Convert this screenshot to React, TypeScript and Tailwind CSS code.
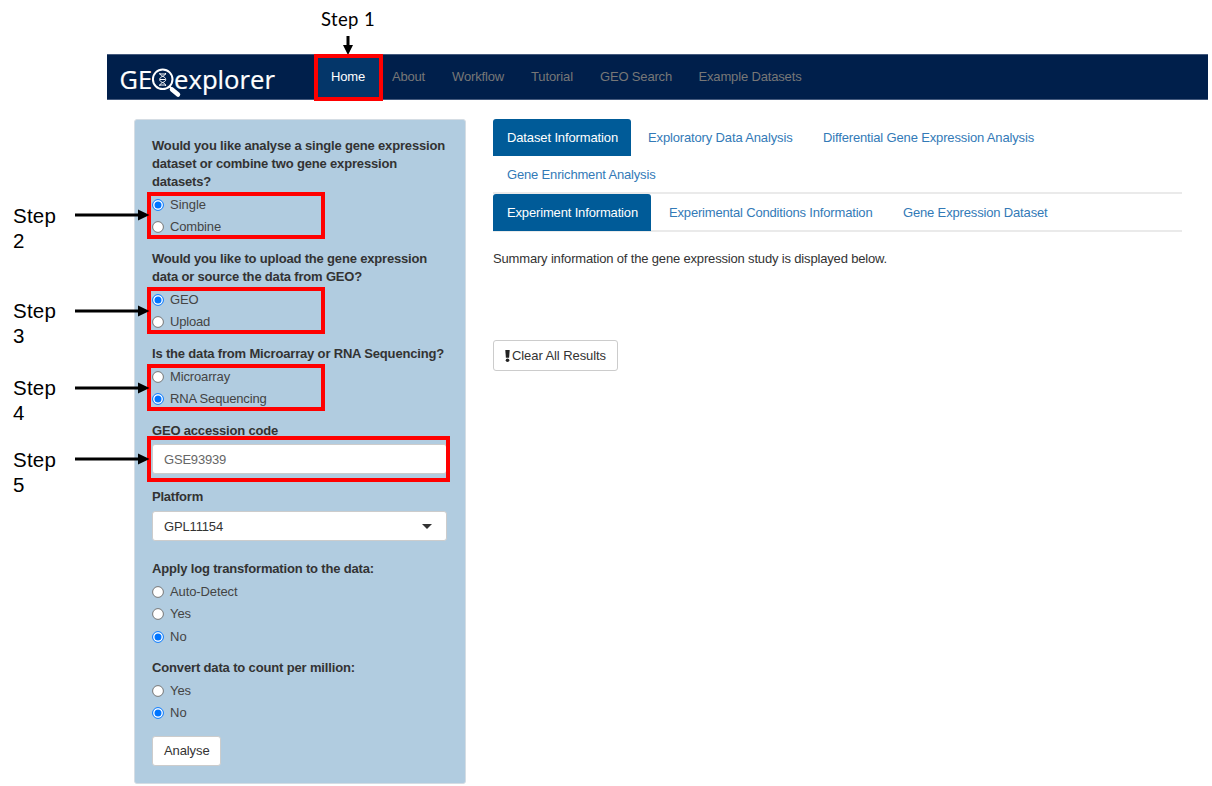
import React from "react";

function T({ w, children, className = "" }: { w: number; children: string; className?: string }) {
  const ref = React.useRef<HTMLSpanElement>(null);
  React.useLayoutEffect(() => {
    const el = ref.current;
    if (!el) return;
    el.style.letterSpacing = "0px";
    const natural = el.getBoundingClientRect().width;
    el.style.letterSpacing = `${(w - natural) / children.length}px`;
  }, [w, children]);
  return (
    <span ref={ref} className={`inline-block whitespace-nowrap ${className}`}>
      {children}
    </span>
  );
}

function Label({ lines }: { lines: [string, number][] }) {
  return (
    <div className="font-bold text-[#333]">
      {lines.map(([text, w]) => (
        <div key={text} className="h-[18px] leading-[18px]">
          <T w={w}>{text}</T>
        </div>
      ))}
    </div>
  );
}

function Radio({ text, w, on = false, tight = false }: { text: string; w: number; on?: boolean; tight?: boolean }) {
  return (
    <label className={`flex items-center gap-[6px] text-[#444] ${tight ? "h-[22px]" : "h-[22.5px]"}`}>
      <svg viewBox="0 0 12 12" className="size-3 shrink-0">
        <circle cx="6" cy="6" r="5.4" fill="#fff" stroke={on ? "#0075ff" : "#767676"} strokeWidth="1" />
        {on && <circle cx="6" cy="6" r="3.5" fill="#0075ff" />}
      </svg>
      <T w={w} className="leading-[18px]">{text}</T>
    </label>
  );
}

function Logo() {
  return (
    <svg viewBox="0 0 160 44" className="h-[44px] w-[160px] shrink-0" fill="#fff">
      <g fontFamily="'Open Sans', 'Noto Sans', sans-serif" fontSize="25.5" stroke="#fff" strokeWidth="0.2">
        <text x="-0.5" y="33.5" textLength="32.5" lengthAdjust="spacingAndGlyphs">GE</text>
        <text x="54" y="33.5" textLength="101" lengthAdjust="spacingAndGlyphs">explorer</text>
      </g>
      <g fill="none" stroke="#fff">
        <circle cx="42.7" cy="24.3" r="9.8" strokeWidth="2" />
        <path d="M49.5 31.5L52 34" strokeWidth="2" />
        <path d="M52 34.5L58 39.5" strokeWidth="4.5" strokeLinecap="round" />
        <path d="M39.7 18C39.7 21.5 45.7 21 45.7 24.5S39.7 27 39.7 31M45.7 18C45.7 21.5 39.7 21 39.7 24.5S45.7 27 45.7 31M39.7 19h6M40 24.5h5.4M39.7 30h6" strokeWidth="1" />
      </g>
    </svg>
  );
}

const nav: [string, number, string][] = [
  ["About", 33, "ml-[10px]"],
  ["Workflow", 52, "ml-[27px]"],
  ["Tutorial", 42, "ml-[27px]"],
  ["GEO Search", 72, "ml-[27px]"],
  ["Example Datasets", 103, "ml-[26.5px]"],
];

function Arrow({ className }: { className: string }) {
  return (
    <svg viewBox="0 0 75 12" className={`absolute left-[75px] h-3 w-[75px] ${className}`}>
      <path d="M0 4.5H63V0.5L74.5 6L63 11.5V7.5H0Z" fill="#000" />
    </svg>
  );
}

function Step({ n, className }: { n: string; className: string }) {
  return (
    <div className={`absolute left-[13px] w-12 text-[20.5px] leading-[25px] text-black ${className}`}>
      <T w={43}>Step</T>
      <div>{n}</div>
    </div>
  );
}

export default function App() {
  return (
    <div className="relative h-[786px] w-[1212px] overflow-hidden bg-white pt-[54px] font-['Liberation_Sans',Arial,sans-serif] text-[13px] text-[#333]">
      <header className="ml-[107px] flex h-[46px] w-[1101px] items-center border-y border-[#455a7d] bg-[#001f4b] pl-[13px] text-[#777]">
        <Logo />
        <div className="ml-[35px] flex h-full w-[67px] items-center bg-[#043669] pl-4 text-white">
          <T w={34}>Home</T>
        </div>
        {nav.map(([text, w, cls]) => (
          <div key={text} className={cls}>
            <T w={w}>{text}</T>
          </div>
        ))}
      </header>

      <div className="flex pt-[19px] pl-[134px]">
        <aside className="flex h-[665px] w-[332px] flex-col rounded-[3px] border border-[#d5dde4] bg-[#b1cce0] px-[17px] pt-[17px]">
          <Label
            lines={[
              ["Would you like analyse a single gene expression", 293],
              ["dataset or combine two gene expression", 245],
              ["datasets?", 59],
            ]}
          />
          <div className="mt-[3px]">
            <Radio text="Single" w={36} on tight />
            <Radio text="Combine" w={51} tight />
          </div>
          <div className="mt-[12px]">
            <Label
              lines={[
                ["Would you like to upload the gene expression", 275],
                ["data or source the data from GEO?", 210],
              ]}
            />
          </div>
          <div className="mt-[3px]">
            <Radio text="GEO" w={28.5} on tight />
            <Radio text="Upload" w={40} tight />
          </div>
          <div className="mt-[12px]">
            <Label lines={[["Is the data from Microarray or RNA Sequencing?", 292]]} />
          </div>
          <div className="mt-[3px]">
            <Radio text="Microarray" w={60} tight />
            <Radio text="RNA Sequencing" w={96.5} on tight />
          </div>
          <div className="mt-[12px]">
            <Label lines={[["GEO accession code", 126]]} />
          </div>
          <div className="mt-[4px] flex h-[30px] w-[295px] items-center rounded-[3px] border border-[#ccc] bg-white pl-[11px] text-[#666]">
            <T w={62} className="pt-px">GSE93939</T>
          </div>
          <div className="mt-[14px]">
            <Label lines={[["Platform", 51]]} />
          </div>
          <div className="mt-[5px] flex h-[30px] w-[295px] items-center justify-between rounded-[3px] border border-[#ccc] bg-white pr-[14px] pl-[11px]">
            <T w={59} className="pt-px">GPL11154</T>
            <svg viewBox="0 0 10 5" className="h-[5px] w-[10px]">
              <path d="M0 0H10L5 5Z" fill="#333" />
            </svg>
          </div>
          <div className="mt-[18.5px]">
            <Label lines={[["Apply log transformation to the data:", 222]]} />
          </div>
          <div className="mt-[2.75px]">
            <Radio text="Auto-Detect" w={67.5} />
            <Radio text="Yes" w={21} />
            <Radio text="No" w={17} on />
          </div>
          <div className="mt-[10.75px]">
            <Label lines={[["Convert data to count per million:", 203]]} />
          </div>
          <div className="mt-[3px]">
            <Radio text="Yes" w={21} />
            <Radio text="No" w={17} on />
          </div>
          <button className="mt-[11.5px] flex h-[30px] w-[68.5px] items-center rounded-[3px] border border-[#ccc] bg-white pl-[11px]">
            <T w={45.5}>Analyse</T>
          </button>
        </aside>

        <main className="ml-[27px] w-[689px]">
          <div className="flex h-[37px] text-[#337ab7]">
            <div className="flex w-[138px] items-center rounded-t-[3px] bg-[#005b98] pl-[14px] text-white">
              <T w={111}>Dataset Information</T>
            </div>
            <div className="ml-[17px] flex items-center">
              <T w={144.5}>Exploratory Data Analysis</T>
            </div>
            <div className="ml-[30.5px] flex items-center">
              <T w={211}>Differential Gene Expression Analysis</T>
            </div>
          </div>
          <div className="flex h-[38px] items-center border-b-2 border-[#eaeaea] pt-px pl-[14px] text-[#337ab7]">
            <T w={148.5}>Gene Enrichment Analysis</T>
          </div>
          <div className="flex h-[38px] border-b-2 border-[#eaeaea] text-[#337ab7]">
            <div className="flex h-[37px] w-[158px] items-center rounded-t-[3px] bg-[#005b98] pl-[14px] text-white">
              <T w={131}>Experiment Information</T>
            </div>
            <div className="ml-[18px] flex h-[37px] items-center">
              <T w={203.5}>Experimental Conditions Information</T>
            </div>
            <div className="ml-[30.5px] flex h-[37px] items-center">
              <T w={144.5}>Gene Expression Dataset</T>
            </div>
          </div>
          <p className="mt-[18px] leading-[18px]">
            <T w={394}>Summary information of the gene expression study is displayed below.</T>
          </p>
          <button className="mt-[72px] flex h-[31px] w-[124.5px] items-center rounded-[3px] border border-[#ccc] bg-white pl-[10.5px]">
            <svg viewBox="0 0 5 12" className="mr-[2.5px] h-3 w-[5px]" fill="#222">
              <path d="M0.3 0H4.7L4.1 7.7H0.9Z" />
              <circle cx="2.5" cy="10.2" r="1.8" />
            </svg>
            <T w={94}>Clear All Results</T>
          </button>
        </main>
      </div>

      <div className="absolute top-[8px] left-[321px] font-[Lato] text-[18.5px] leading-[22px] text-black">
        <T w={54}>Step 1</T>
      </div>
      <svg viewBox="0 0 10 19" className="absolute top-[36px] left-[343px] h-[19px] w-[10px]">
        <path d="M3.5 0H6.5V9H10L5 19L0 9H3.5Z" fill="#000" />
      </svg>
      <div className="absolute top-[54px] left-[314px] h-[47px] w-[69px] border-4 border-[#f00]" />
      <div className="absolute top-[192px] left-[147px] h-[47px] w-[178px] border-4 border-[#f00]" />
      <div className="absolute top-[287px] left-[147px] h-[47px] w-[178px] border-4 border-[#f00]" />
      <div className="absolute top-[364px] left-[147px] h-[47px] w-[178px] border-4 border-[#f00]" />
      <div className="absolute top-[436px] left-[147px] h-[46px] w-[303px] border-4 border-[#f00]" />
      <Step n="2" className="top-[203px]" />
      <Step n="3" className="top-[298px]" />
      <Step n="4" className="top-[375px]" />
      <Step n="5" className="top-[447px]" />
      <Arrow className="top-[209px]" />
      <Arrow className="top-[305px]" />
      <Arrow className="top-[382px]" />
      <Arrow className="top-[453px]" />
    </div>
  );
}
